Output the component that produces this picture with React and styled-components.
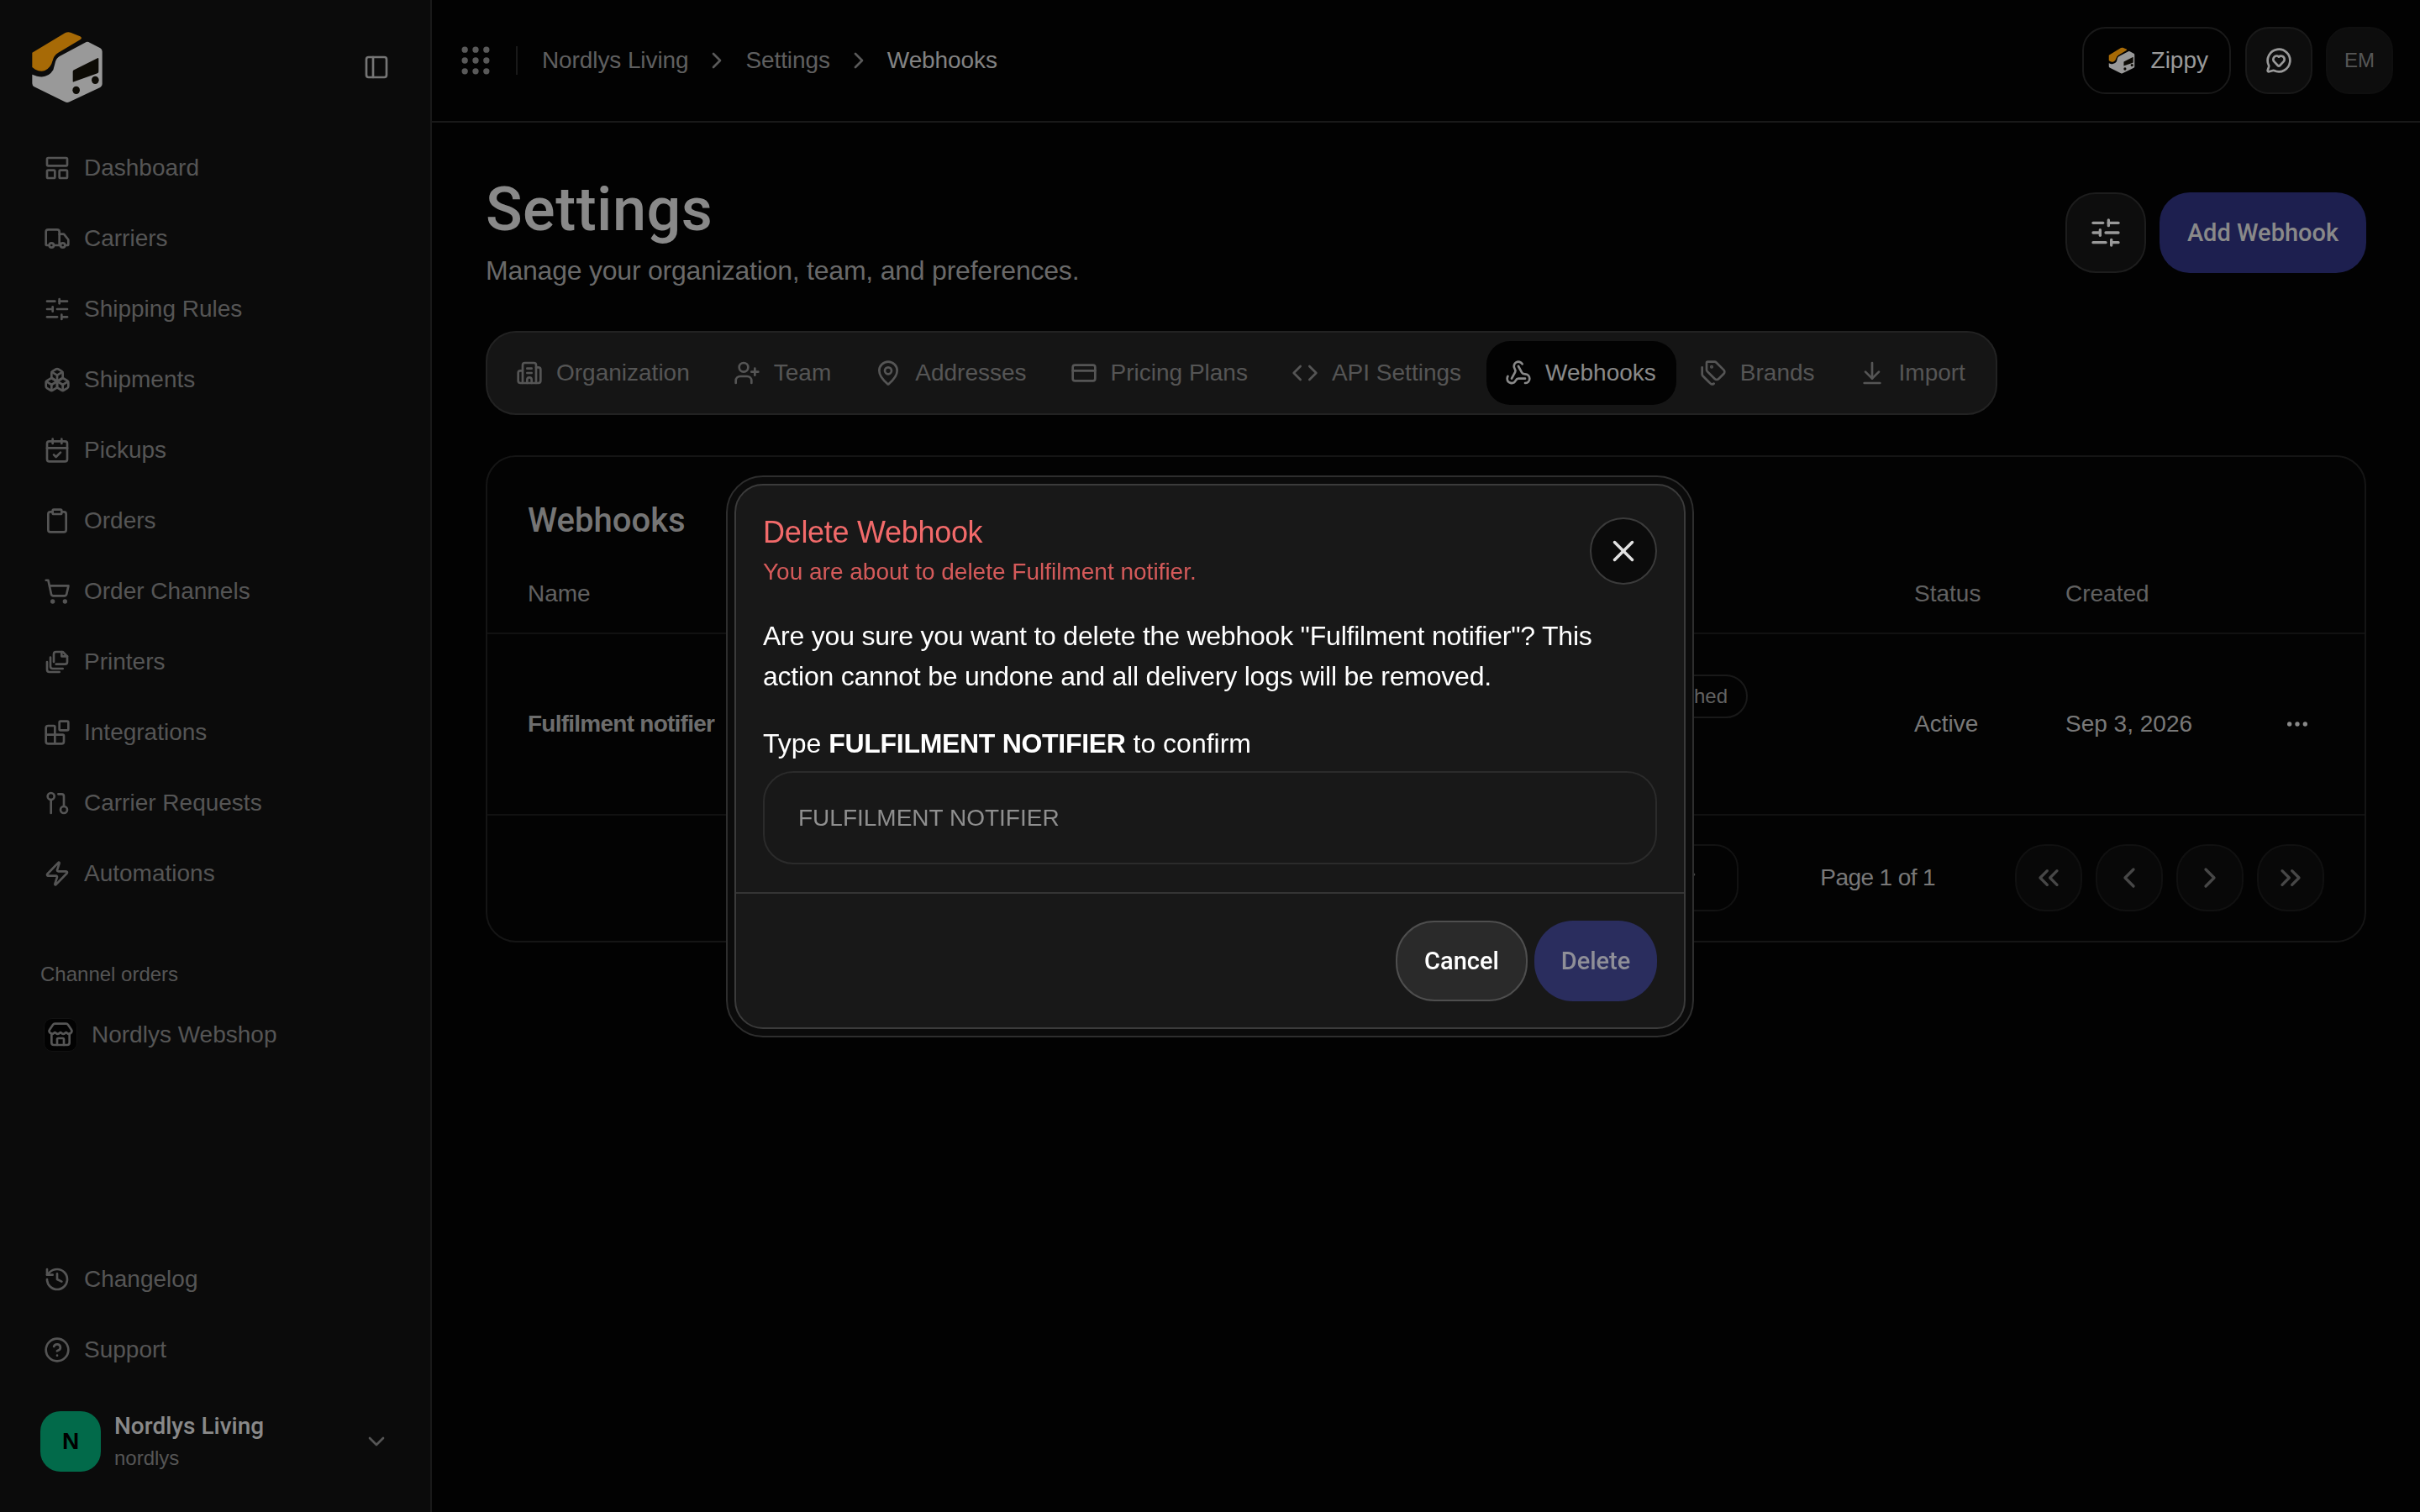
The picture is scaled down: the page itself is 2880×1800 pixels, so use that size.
import React from "react";
import styled, { createGlobalStyle } from "styled-components";
import {
  PanelLeft,
  LayoutPanelTop,
  Truck,
  SlidersHorizontal,
  Boxes,
  CalendarCheck,
  Clipboard,
  ShoppingCart,
  Blocks,
  Zap,
  History,
  CircleHelp,
  Store,
  ChevronDown,
  ChevronRight,
  ChevronLeft,
  ChevronsLeft,
  ChevronsRight,
  Grip,
  MessageCircleHeart,
  Building2,
  UserPlus,
  MapPin,
  CreditCard,
  Code,
  Webhook,
  Tags,
  ArrowDownToLine,
  Ellipsis,
  X,
} from "lucide-react";

const sans = `"Liberation Sans", Arial, sans-serif`;
const medium = `Roboto, "Liberation Sans", sans-serif`;

const GlobalStyle = createGlobalStyle`
  html, body {
    margin: 0;
    padding: 0;
    height: 100%;
    background: #030303;
  }
  body {
    font-family: ${sans};
    font-size: 28px;
    overflow: hidden;
  }
  * {
    box-sizing: border-box;
  }
`;

const Page = styled.div`
  display: flex;
  width: 100%;
  height: 100vh;
`;

/* sidebar */
const Sidebar = styled.aside`
  display: flex;
  flex-direction: column;
  flex: 0 0 514px;
  height: 100%;
  background: #101010;
  border-right: 2px solid #252525;
`;

const SidebarHead = styled.div`
  display: flex;
  align-items: center;
  justify-content: space-between;
  padding: 20px 48px 18px 20px;
  color: #a8a8a8;
`;

const NavRow = styled.a`
  display: flex;
  align-items: center;
  gap: 16px;
  height: 84px;
  padding-left: 52px;
  font-size: 28px;
  color: #7a7a7a;
  svg {
    flex: none;
    color: #7a7a7a;
  }
`;

const GroupLabel = styled.div`
  margin: 62px 0 14px 48px;
  font-size: 24px;
  line-height: 32px;
  color: #7a7a7a;
`;

const ShopRow = styled(NavRow)`
  gap: 17px;
`;

const ShopTile = styled.span`
  display: flex;
  align-items: center;
  justify-content: center;
  width: 40px;
  height: 40px;
  border: 1px solid #1a1a1a;
  border-radius: 10px;
  background: #030303;
`;

const SidebarFoot = styled.div`
  margin-top: auto;
  padding-bottom: 48px;
`;

const OrgRow = styled.div`
  display: flex;
  align-items: center;
  gap: 16px;
  margin-top: 31px;
  padding: 0 48px;
  color: #7a7a7a;
`;

const OrgTile = styled.div`
  display: flex;
  align-items: center;
  justify-content: center;
  width: 72px;
  height: 72px;
  border-radius: 24px;
  background: #04996a;
  color: #000;
  font-weight: 700;
  font-size: 28px;
`;

const OrgText = styled.div`
  flex: 1;
`;

const OrgName = styled.div`
  font-family: ${medium};
  font-weight: 500;
  font-size: 28px;
  line-height: 36px;
  color: #c5c5c5;
`;

const OrgSlug = styled.div`
  margin-top: 4px;
  font-size: 24px;
  line-height: 32px;
  color: #7a7a7a;
`;

/* main */
const Main = styled.main`
  flex: 1;
  min-width: 0;
`;

const TopBar = styled.header`
  display: flex;
  align-items: center;
  height: 146px;
  padding: 0 32px 0 30px;
  border-bottom: 2px solid #252525;
  color: #808080;
`;

const GridIcon = styled(Grip)`
  fill: currentColor;
`;

const Separator = styled.span`
  width: 2px;
  height: 34px;
  margin: 0 29px 0 26px;
  background: #252525;
`;

const Crumb = styled.span`
  font-size: 28px;
  letter-spacing: -0.1px;
  color: ${(p) => (p.$current ? "#bababa" : "#888")};
`;

const CrumbArrow = styled(ChevronRight)`
  margin: 0 18px;
`;

const TopActions = styled.div`
  display: flex;
  align-items: center;
  gap: 16px;
  margin-left: auto;
`;

const ZippyButton = styled.button`
  display: flex;
  align-items: center;
  gap: 13px;
  height: 80px;
  padding: 0 25px 0 23px;
  margin-right: 1px;
  border: 2px solid #252525;
  border-radius: 28px;
  background: transparent;
  color: #dcdcdc;
  font-family: ${sans};
  font-size: 28px;
`;

const SquareButton = styled.button`
  display: flex;
  align-items: center;
  justify-content: center;
  width: 80px;
  height: 80px;
  border: 2px solid ${(p) => (p.$plain ? "#161616" : "#252525")};
  border-radius: 28px;
  background: #141414;
  color: ${(p) => (p.$plain ? "#7c7c7c" : "#dcdcdc")};
  font-family: ${sans};
  font-size: 24px;
`;

const Content = styled.div`
  padding: 64px 64px 0;
`;

const PageHead = styled.div`
  display: flex;
  align-items: center;
  justify-content: space-between;
`;

const PageTitle = styled.h1`
  margin: 0;
  font-family: ${medium};
  font-weight: 500;
  font-size: 72px;
  line-height: 80px;
  letter-spacing: 0.5px;
  color: #c5c5c5;
`;

const PageSub = styled.p`
  margin: 10px 0 0;
  font-size: 32px;
  line-height: 44px;
  letter-spacing: -0.22px;
  color: #979797;
`;

const HeadActions = styled.div`
  display: flex;
  gap: 16px;
`;

const FilterButton = styled.button`
  display: flex;
  align-items: center;
  justify-content: center;
  width: 96px;
  height: 96px;
  border: 2px solid #2a2a2a;
  border-radius: 36px;
  background: #141414;
  color: #dcdcdc;
`;

const PrimaryButton = styled.button`
  height: 96px;
  width: 246px;
  border: none;
  border-radius: 36px;
  background: #2a2d72;
  color: #c5c5c5;
  font-family: ${medium};
  font-weight: 500;
  font-size: 29px;
`;

const TabBar = styled.nav`
  display: inline-flex;
  gap: 6px;
  margin-top: 50px;
  padding: 10px 12px;
  border: 2px solid #323232;
  border-radius: 36px;
  background: #1f1f1f;
`;

const Tab = styled.a`
  display: flex;
  align-items: center;
  gap: 16px;
  height: 76px;
  padding: 0 24px 0 22px;
  border-radius: 28px;
  font-size: 28px;
  background: ${(p) => (p.$active ? "#030303" : "transparent")};
  color: ${(p) => (p.$active ? "#c5c5c5" : "#7a7a7a")};
`;

const Card = styled.section`
  margin-top: 48px;
  height: 580px;
  border: 2px solid #1f1f1f;
  border-radius: 36px;
  background: #050505;
`;

const CardTitle = styled.h2`
  margin: 0;
  padding: 52px 48px 17px;
  font-family: ${medium};
  font-weight: 500;
  font-size: 40px;
  line-height: 48px;
  color: #a8a8a8;
`;

const TableRow = styled.div`
  display: grid;
  grid-template-columns: 1000px 650px 180px 1fr 64px;
  align-items: center;
  height: ${(p) => p.$height}px;
  padding: 0 48px;
  border-bottom: 2px solid #191919;
`;

const HeadCell = styled.div`
  font-size: 28px;
  color: #8c8c8c;
`;

const Cell = styled.div`
  font-size: 28px;
  color: #adadad;
`;

const NameCell = styled(Cell)`
  font-weight: 700;
  letter-spacing: -0.75px;
  color: #9c9c9c;
`;

const EventsCell = styled.div`
  display: flex;
  justify-content: flex-end;
  padding-right: 198px;
`;

const EventBadge = styled.span`
  display: flex;
  align-items: center;
  height: 52px;
  margin-bottom: 66px;
  padding: 0 22px;
  border: 2px solid #252525;
  border-radius: 26px;
  font-size: 24px;
  color: #8c8c8c;
`;

const ActionCell = styled.div`
  display: flex;
  justify-content: center;
  color: #c5c5c5;
  svg {
    fill: currentColor;
  }
`;

const TableFoot = styled.div`
  display: flex;
  align-items: center;
  justify-content: flex-end;
  height: 146px;
  padding: 2px 48px 0;
`;

const RowsSelect = styled.div`
  display: flex;
  align-items: center;
  justify-content: flex-end;
  width: 180px;
  height: 80px;
  padding-right: 43px;
  border: 2px solid #1a1a1a;
  border-radius: 28px;
  color: #666;
`;

const PageLabel = styled.div`
  margin: 0 95px 0 97px;
  font-size: 28px;
  letter-spacing: -0.6px;
  color: #adadad;
`;

const PagerGroup = styled.div`
  display: flex;
  gap: 16px;
`;

const PagerButton = styled.button`
  display: flex;
  align-items: center;
  justify-content: center;
  width: 80px;
  height: 80px;
  border: 2px solid #181818;
  border-radius: 36px;
  background: #0c0c0c;
  color: #666;
`;

/* dialog */
const Backdrop = styled.div`
  position: fixed;
  inset: 0;
  display: flex;
  align-items: center;
  justify-content: center;
  padding-top: 1px;
  background: rgba(0, 0, 0, 0.3);
`;

const DialogFrame = styled.div`
  width: 1152px;
  padding: 8px;
  border: 2px solid #2e2e2e;
  border-radius: 44px;
  background: #0b0b0b;
`;

const Dialog = styled.div`
  position: relative;
  border: 2px solid #3b3b3b;
  border-radius: 34px;
  background: #181818;
`;

const DialogBody = styled.div`
  padding: 34px 32px 33px;
`;

const DialogTitle = styled.h3`
  margin: 0;
  font-weight: 400;
  font-size: 36px;
  line-height: 44px;
  letter-spacing: -0.3px;
  color: #f26a6a;
`;

const DialogSub = styled.p`
  margin: 7px 0 0;
  font-size: 28px;
  line-height: 36px;
  color: #d45a5a;
`;

const CloseButton = styled.button`
  position: absolute;
  top: 38px;
  right: 32px;
  display: flex;
  align-items: center;
  justify-content: center;
  width: 80px;
  height: 80px;
  border: 2px solid #3b3b3b;
  border-radius: 50%;
  background: #0b0b0b;
  color: #e2e2e2;
`;

const Message = styled.p`
  margin: 34px 0 0;
  font-size: 32px;
  line-height: 48px;
  letter-spacing: -0.22px;
  color: #fff;
`;

const ConfirmLabel = styled.label`
  display: block;
  margin-top: 36px;
  font-size: 32px;
  line-height: 40px;
  color: #fff;
  b {
    font-weight: 700;
    letter-spacing: -0.3px;
  }
`;

const ConfirmInput = styled.input`
  display: block;
  width: 100%;
  height: 111px;
  margin-top: 13px;
  padding: 0 40px;
  border: 2px solid #2b2b2b;
  border-radius: 36px;
  background: #181818;
  outline: none;
  font-family: ${sans};
  font-size: 28px;
  color: #8f8f8f;
`;

const DialogFoot = styled.div`
  display: flex;
  justify-content: flex-end;
  gap: 8px;
  padding: 32px 32px 31px;
  border-top: 2px solid #343434;
`;

const CancelButton = styled.button`
  width: 157px;
  height: 96px;
  border: 2px solid #4e4e4e;
  border-radius: 46px;
  background: #2a2a2a;
  color: #fff;
  font-family: ${medium};
  font-weight: 500;
  font-size: 29px;
`;

const DeleteButton = styled.button`
  width: 146px;
  height: 96px;
  border: none;
  border-radius: 46px;
  background: #2a2d5e;
  color: #8f8f98;
  font-family: ${medium};
  font-weight: 500;
  font-size: 29px;
`;

/* drawings */
const Logo = ({ size }) => (
  <svg width={size} height={size} viewBox="0 0 360 360">
    <path
      d="M55 128 L172 58 Q182 52 192 56 L226 70 Q236 76 226 82 L148 128 Q132 138 128 156 Q122 182 100 192 Q84 198 66 188 L55 180 Z"
      fill="#f0980a"
    />
    <path
      d="M55 206 L72 212 Q110 222 130 190 Q134 176 138 160 Q142 146 154 140 L248 90 Q254 88 260 92 L298 112 Q305 116 305 124 L305 240 Q305 248 298 252 L188 304 Q180 308 172 304 L62 250 Q55 246 55 238 Z"
      fill="#dcdcdc"
    />
    <path d="M204 190 L288 148 Q292 146 292 150 L292 196 Q292 200 288 202 L204 232 Q200 234 200 230 L200 196 Q200 192 204 190 Z" fill="#141008" />
    <ellipse cx="212" cy="262" rx="13" ry="14" fill="#141008" />
    <ellipse cx="280" cy="226" rx="13" ry="14" fill="#141008" />
  </svg>
);

const PrintersIcon = ({ size = 32 }) => (
  <svg width={size} height={size} viewBox="0 0 24 24" fill="none" stroke="currentColor" strokeWidth="2" strokeLinecap="round" strokeLinejoin="round">
    <path d="M9 12V5a2 2 0 0 1 2-2h6l4 4v5a2 2 0 0 1-2 2h-8" />
    <path d="M16 3v4h5" />
    <path d="M6 8v8a2 2 0 0 0 2 2h9" />
    <path d="M3 12v7a2 2 0 0 0 2 2h9" />
  </svg>
);

const RequestsIcon = ({ size = 32 }) => (
  <svg width={size} height={size} viewBox="0 0 24 24" fill="none" stroke="currentColor" strokeWidth="2" strokeLinecap="round" strokeLinejoin="round">
    <circle cx="6.5" cy="6" r="3" />
    <path d="M6.5 9v12" />
    <path d="M13 4h3a2 2 0 0 1 2 2v9" />
    <circle cx="18" cy="18" r="3" />
  </svg>
);

const mainNav = [
  ["Dashboard", LayoutPanelTop],
  ["Carriers", Truck],
  ["Shipping Rules", SlidersHorizontal],
  ["Shipments", Boxes],
  ["Pickups", CalendarCheck],
  ["Orders", Clipboard],
  ["Order Channels", ShoppingCart],
  ["Printers", PrintersIcon],
  ["Integrations", Blocks],
  ["Carrier Requests", RequestsIcon],
  ["Automations", Zap],
];

const tabs = [
  ["Organization", Building2],
  ["Team", UserPlus],
  ["Addresses", MapPin],
  ["Pricing Plans", CreditCard],
  ["API Settings", Code],
  ["Webhooks", Webhook],
  ["Brands", Tags],
  ["Import", ArrowDownToLine],
];

const App = () => {
  return (
    <>
      <GlobalStyle />
      <Page>
        <Sidebar>
          <SidebarHead>
            <Logo size={120} />
            <PanelLeft size={32} />
          </SidebarHead>
          {mainNav.map(([label, Icon]) => (
            <NavRow key={label}>
              <Icon size={32} />
              {label}
            </NavRow>
          ))}
          <GroupLabel>Channel orders</GroupLabel>
          <ShopRow>
            <ShopTile>
              <Store size={32} />
            </ShopTile>
            Nordlys Webshop
          </ShopRow>
          <SidebarFoot>
            <NavRow>
              <History size={32} />
              Changelog
            </NavRow>
            <NavRow>
              <CircleHelp size={32} />
              Support
            </NavRow>
            <OrgRow>
              <OrgTile>N</OrgTile>
              <OrgText>
                <OrgName>Nordlys Living</OrgName>
                <OrgSlug>nordlys</OrgSlug>
              </OrgText>
              <ChevronDown size={32} />
            </OrgRow>
          </SidebarFoot>
        </Sidebar>

        <Main>
          <TopBar>
            <GridIcon size={44} />
            <Separator />
            <Crumb>Nordlys Living</Crumb>
            <CrumbArrow size={32} />
            <Crumb>Settings</Crumb>
            <CrumbArrow size={32} />
            <Crumb $current>Webhooks</Crumb>
            <TopActions>
              <ZippyButton>
                <Logo size={44} />
                Zippy
              </ZippyButton>
              <SquareButton>
                <MessageCircleHeart size={32} />
              </SquareButton>
              <SquareButton $plain>EM</SquareButton>
            </TopActions>
          </TopBar>

          <Content>
            <PageHead>
              <div>
                <PageTitle>Settings</PageTitle>
                <PageSub>Manage your organization, team, and preferences.</PageSub>
              </div>
              <HeadActions>
                <FilterButton>
                  <SlidersHorizontal size={40} />
                </FilterButton>
                <PrimaryButton>Add Webhook</PrimaryButton>
              </HeadActions>
            </PageHead>

            <TabBar>
              {tabs.map(([label, Icon]) => (
                <Tab key={label} $active={label === "Webhooks"}>
                  <Icon size={32} />
                  {label}
                </Tab>
              ))}
            </TabBar>

            <Card>
              <CardTitle>Webhooks</CardTitle>
              <TableRow $height={94}>
                <HeadCell>Name</HeadCell>
                <div />
                <HeadCell>Status</HeadCell>
                <HeadCell>Created</HeadCell>
                <div />
              </TableRow>
              <TableRow $height={216}>
                <NameCell>Fulfilment notifier</NameCell>
                <EventsCell>
                  <EventBadge>Dispatched</EventBadge>
                </EventsCell>
                <Cell>Active</Cell>
                <Cell>Sep 3, 2026</Cell>
                <ActionCell>
                  <Ellipsis size={32} />
                </ActionCell>
              </TableRow>
              <TableFoot>
                <RowsSelect>
                  <ChevronDown size={32} />
                </RowsSelect>
                <PageLabel>Page 1 of 1</PageLabel>
                <PagerGroup>
                  <PagerButton>
                    <ChevronsLeft size={40} />
                  </PagerButton>
                  <PagerButton>
                    <ChevronLeft size={40} />
                  </PagerButton>
                  <PagerButton>
                    <ChevronRight size={40} />
                  </PagerButton>
                  <PagerButton>
                    <ChevronsRight size={40} />
                  </PagerButton>
                </PagerGroup>
              </TableFoot>
            </Card>
          </Content>
        </Main>
      </Page>

      <Backdrop>
        <DialogFrame>
          <Dialog>
            <CloseButton>
              <X size={42} />
            </CloseButton>
            <DialogBody>
              <DialogTitle>Delete Webhook</DialogTitle>
              <DialogSub>You are about to delete Fulfilment notifier.</DialogSub>
              <Message>
                Are you sure you want to delete the webhook "Fulfilment notifier"? This action
                cannot be undone and all delivery logs will be removed.
              </Message>
              <ConfirmLabel>
                Type <b>FULFILMENT NOTIFIER</b> to confirm
              </ConfirmLabel>
              <ConfirmInput readOnly value="FULFILMENT NOTIFIER" />
            </DialogBody>
            <DialogFoot>
              <CancelButton>Cancel</CancelButton>
              <DeleteButton>Delete</DeleteButton>
            </DialogFoot>
          </Dialog>
        </DialogFrame>
      </Backdrop>
    </>
  );
};

export default App;
